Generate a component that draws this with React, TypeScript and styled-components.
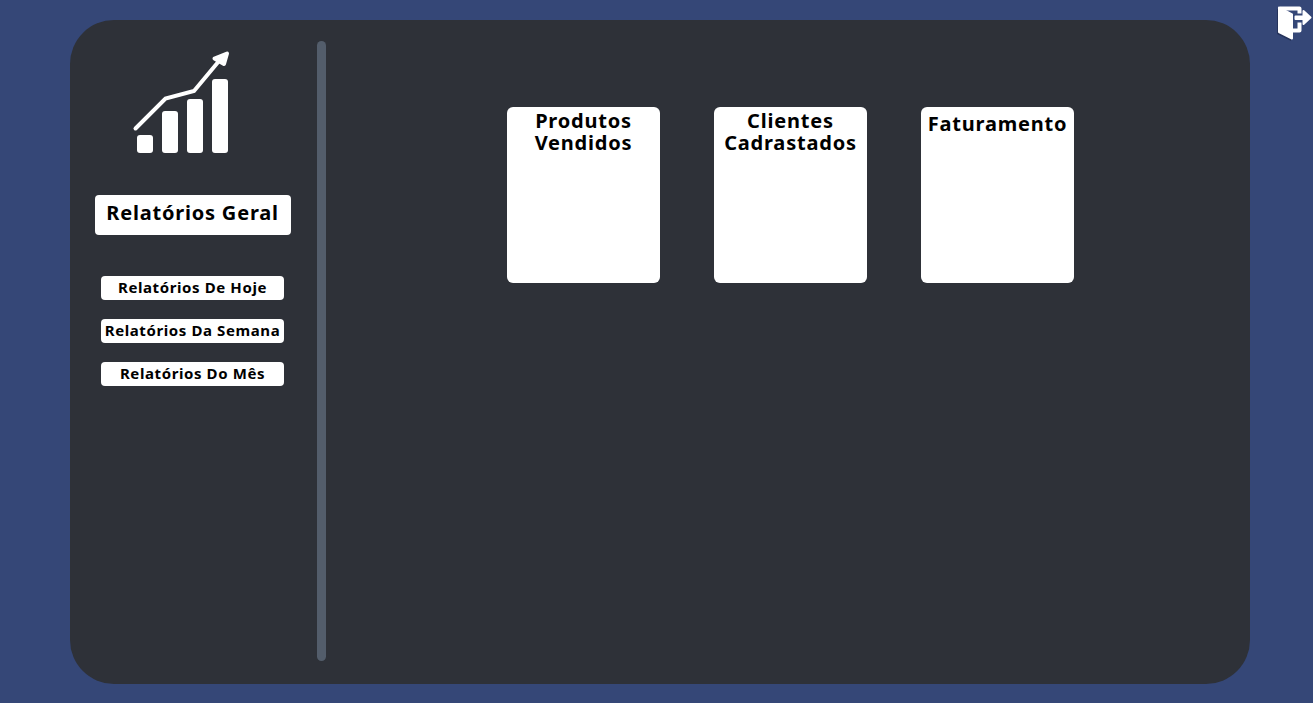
import React from "react";
import styled, { createGlobalStyle } from "styled-components";

const GlobalStyle = createGlobalStyle`
  * { box-sizing: border-box; }
  body {
    margin: 0;
    background: #354777;
    color: #000;
    font-family: "Noto Sans", "Open Sans", sans-serif;
    font-weight: 700;
  }
`;

const Page = styled.div`
  position: relative;
  display: flex;
  min-height: 100vh;
  padding: 20px 63px 19px 70px;
`;

const Panel = styled.div`
  display: flex;
  flex: 1;
  border-radius: 44px;
  background: #2e3138;
`;

const Sidebar = styled.aside`
  display: flex;
  flex-direction: column;
  align-items: center;
  width: 247px;
  padding: 30px 2px 30px 0;
`;

const ChartLogo = styled.svg`
  display: block;
  width: 100px;
  height: 105px;
  margin-right: 22px;
`;

const Menu = styled.nav`
  display: flex;
  flex-direction: column;
  align-items: center;
  gap: 19px;
  margin-top: 41px;
`;

const MenuButton = styled.button`
  display: block;
  width: 183px;
  height: 24px;
  padding: 0 0 2px;
  border: 0;
  border-radius: 4px;
  background: #fff;
  color: #000;
  font: inherit;
  font-size: 15px;
  line-height: 22px;
  letter-spacing: 0.04em;
  white-space: nowrap;
  cursor: pointer;
`;

const MainMenuButton = styled(MenuButton)`
  width: 196px;
  height: 40px;
  padding-bottom: 4px;
  margin-top: 40px;
  font-size: 20px;
`;

const Divider = styled.div`
  width: 9px;
  margin: 21px 0 23px;
  border-radius: 5px;
  background: #535d6b;
`;

const Content = styled.main`
  display: flex;
  flex: 1;
  align-items: flex-start;
  justify-content: center;
  gap: 54px;
  padding: 87px 0 30px 5px;
`;

const Card = styled.section`
  width: 153px;
  height: 176px;
  padding-top: 3px;
  border-radius: 6px;
  background: #fff;
`;

const CardTitle = styled.h2<{ $single?: boolean }>`
  margin: 0;
  padding-top: ${(p) => (p.$single ? 3 : 0)}px;
  font-size: 20px;
  line-height: 22px;
  letter-spacing: 0.04em;
  text-align: center;
`;

const ExitButton = styled.button`
  position: absolute;
  top: 4px;
  right: 0;
  width: 38px;
  height: 38px;
  padding: 0;
  border: 0;
  background: none;
  cursor: pointer;
  svg { display: block; }
`;

const periods = ["Relatórios De Hoje", "Relatórios Da Semana", "Relatórios Do Mês"];
const cards = ["Produtos Vendidos", "Clientes Cadrastados", "Faturamento"];

export default function App() {
  return (
    <>
      <GlobalStyle />
      <Page>
        <Panel>
          <Sidebar>
            <ChartLogo viewBox="0 0 100 105" fill="#fff" aria-hidden="true">
              <rect x="5" y="85" width="16" height="18" rx="3" />
              <rect x="30" y="61" width="16" height="42" rx="3" />
              <rect x="55" y="49" width="16" height="54" rx="3" />
              <rect x="80" y="29" width="16" height="74" rx="3" />
              <path
                d="M3.5 78.5 33.5 48.5 62 41 87 11"
                fill="none"
                stroke="#fff"
                strokeWidth="4"
                strokeLinecap="round"
              />
              <path
                d="M82.500 8.500 95 3.500 92 14Z"
                stroke="#fff"
                strokeWidth="4"
                strokeLinejoin="round"
              />
            </ChartLogo>
            <MainMenuButton type="button">Relatórios Geral</MainMenuButton>
            <Menu aria-label="Relatórios por período">
              {periods.map((label) => (
                <MenuButton key={label} type="button">{label}</MenuButton>
              ))}
            </Menu>
          </Sidebar>
          <Divider />
          <Content>
            {cards.map((title) => (
              <Card key={title}>
                <CardTitle $single={!title.includes(" ")}>{title}</CardTitle>
              </Card>
            ))}
          </Content>
        </Panel>
        <ExitButton type="button" aria-label="Sair">
          <svg width="38" height="38" viewBox="0 0 38 38" aria-hidden="true">
            <path d="M2 5 16 12V37L2 30Z" fill="#1f2b50" opacity="0.7" />
            <path
              d="M5 4.500H24.500V9.500M24.500 18.500V26.500H18"
              fill="none"
              stroke="#fff"
              strokeWidth="4"
              strokeLinejoin="round"
            />
            <path
              d="M4 3.500 17 10.500V34.500L4 28Z"
              fill="#fff"
              stroke="#fff"
              strokeWidth="2"
              strokeLinejoin="round"
            />
            <path
              d="M20.500 12.500H28.500V7L35.500 13.500 28.500 20V15H20.500Z"
              fill="#fff"
              stroke="#fff"
              strokeWidth="2"
              strokeLinejoin="round"
            />
          </svg>
        </ExitButton>
      </Page>
    </>
  );
}
